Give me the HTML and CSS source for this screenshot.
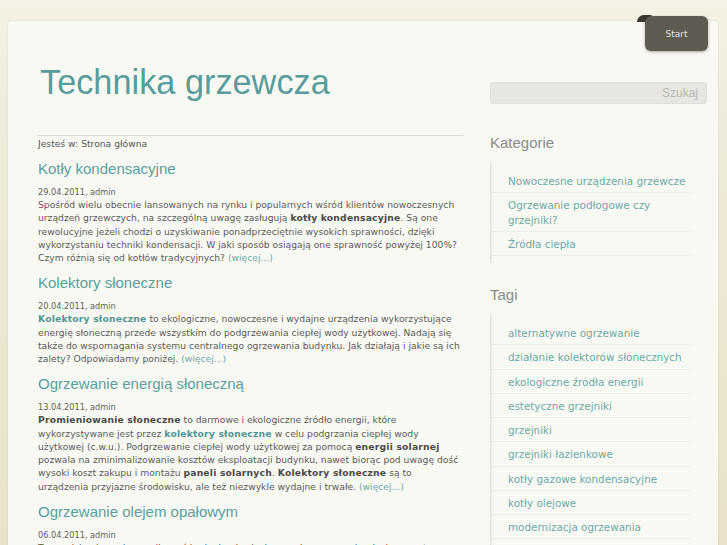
FILE: index.html
```html
<!DOCTYPE html>
<html lang="pl">
<head>
<meta charset="utf-8">
<title>Technika grzewcza</title>
<link rel="stylesheet" href="styles.css">
</head>
<body>
<div class="page">
  <nav class="menu"><a class="tab" href="#">Start</a></nav>
  <div class="card">
    <main class="main">
      <h1 class="site-title">Technika grzewcza</h1>
      <div class="crumbs">Jesteś w: Strona główna</div>

      <article class="post">
        <h2 class="post-title">Kotły kondensacyjne</h2>
        <div class="meta">29.04.2011, admin</div>
        <p class="excerpt">Spośród wielu obecnie lansowanych na rynku i popularnych wśród klientów nowoczesnych urządzeń grzewczych, na szczególną uwagę zasługują <strong>kotły kondensacyjne</strong>. Są one rewolucyjne jeżeli chodzi o uzyskiwanie ponadprzeciętnie wysokich sprawności, dzięki wykorzystaniu techniki kondensacji. W jaki sposób osiągają one sprawność powyżej 100%? Czym różnią się od kotłów tradycyjnych? <a class="more" href="#">(więcej...)</a></p>
      </article>

      <article class="post">
        <h2 class="post-title">Kolektory słoneczne</h2>
        <div class="meta">20.04.2011, admin</div>
        <p class="excerpt"><a class="strong-link" href="#">Kolektory słoneczne</a> to ekologiczne, nowoczesne i wydajne urządzenia wykorzystujące energię słoneczną przede wszystkim do podgrzewania ciepłej wody użytkowej. Nadają się także do wspomagania systemu centralnego ogrzewania budynku. Jak działają i jakie są ich zalety? Odpowiadamy poniżej. <a class="more" href="#">(więcej...)</a></p>
      </article>

      <article class="post">
        <h2 class="post-title">Ogrzewanie energią słoneczną</h2>
        <div class="meta">13.04.2011, admin</div>
        <p class="excerpt"><strong>Promieniowanie słoneczne</strong> to darmowe i ekologiczne źródło energii, które wykorzystywane jest przez <a class="strong-link" href="#">kolektory słoneczne</a> w celu podgrzania ciepłej wody użytkowej (c.w.u.). Podgrzewanie ciepłej wody użytkowej za pomocą <strong>energii solarnej</strong> pozwala na zminimalizowanie kosztów eksploatacji budynku, nawet biorąc pod uwagę dość wysoki koszt zakupu i montażu <strong>paneli solarnych</strong>. <strong>Kolektory słoneczne</strong> są to urządzenia przyjazne środowisku, ale też niezwykle wydajne i trwałe. <a class="more" href="#">(więcej...)</a></p>
      </article>

      <article class="post">
        <h2 class="post-title">Ogrzewanie olejem opałowym</h2>
        <div class="meta">06.04.2011, admin</div>
        <p class="excerpt">Tam, gdzie nie można podłączyć budynku do sieci gazu ziemnego, mieszkańcy często decydują się na ogrzewanie olejem opałowym.</p>
      </article>
    </main>

    <aside class="sidebar">
      <form class="search"><input class="search-input" type="text" placeholder="Szukaj"></form>

      <section class="widget">
        <h3 class="widget-title">Kategorie</h3>
        <ul class="links">
          <li><a href="#">Nowoczesne urządzenia grzewcze</a></li>
          <li><a href="#">Ogrzewanie podłogowe czy grzejniki?</a></li>
          <li><a href="#">Źródła ciepła</a></li>
        </ul>
      </section>

      <section class="widget">
        <h3 class="widget-title">Tagi</h3>
        <ul class="links">
          <li><a href="#">alternatywne ogrzewanie</a></li>
          <li><a href="#">działanie kolektorów słonecznych</a></li>
          <li><a href="#">ekologiczne źródła energii</a></li>
          <li><a href="#">estetyczne grzejniki</a></li>
          <li><a href="#">grzejniki</a></li>
          <li><a href="#">grzejniki łazienkowe</a></li>
          <li><a href="#">kotły gazowe kondensacyjne</a></li>
          <li><a href="#">kotły olejowe</a></li>
          <li><a href="#">modernizacja ogrzewania</a></li>
          <li><a href="#">ogrzewanie podłogowe</a></li>
        </ul>
      </section>
    </aside>
  </div>
</div>
</body>
</html>
```

FILE: styles.css
```css
html, body {
  margin: 0;
  padding: 0;
  height: 100%;
  overflow: hidden;
}

body {
  background-color: #e9e2c9;
  background-image: linear-gradient(to bottom, #f5f2e5 0px, #efebda 120px, #e9e2c9 545px);
  font-family: "DejaVu Sans", Verdana, sans-serif;
  color: #585858;
}

a {
  text-decoration: none;
}

.page {
  position: relative;
  padding: 21px 9px 0 8px;
  min-height: 100%;
  box-sizing: border-box;
}

/* top menu tab */
.menu {
  position: absolute;
  left: 645px;
  top: 16px;
  z-index: 2;
}

.tab {
  position: relative;
  display: flex;
  align-items: center;
  justify-content: center;
  width: 63px;
  height: 35px;
  background: #5f5b53;
  border-radius: 6px;
  box-shadow: 0 1px 3px rgba(0, 0, 0, 0.35);
  color: #e4e1d9;
  font-family: "DejaVu Sans", sans-serif;
  font-size: 9px;
}

.tab::before {
  content: "";
  position: absolute;
  left: -8px;
  top: -1px;
  width: 16px;
  height: 7px;
  background: #3a3731;
  border-radius: 7px 3px 0 0;
  z-index: -1;
}

/* main card */
.card {
  display: grid;
  grid-template-columns: 425px 217px;
  column-gap: 27px;
  align-items: start;
  padding: 41px 11px 0 30px;
  min-height: 540px;
  background: #f9f9f4;
  border-radius: 4px 4px 0 0;
  box-shadow: 0 0 2px rgba(120, 110, 80, 0.18);
}

.site-title {
  margin: 0;
  padding-left: 2px;
  font-family: "Liberation Sans", Arial, sans-serif;
  font-weight: normal;
  font-size: 34.3px;
  line-height: 40px;
  color: #579d9b;
}

.crumbs {
  margin-top: 33px;
  padding-top: 1px;
  border-top: 1px solid #dddcd5;
  font-size: 9.2px;
  line-height: 13px;
  color: #555;
}

.post-title {
  margin: 10px 0 0;
  font-family: "Liberation Sans", Arial, sans-serif;
  font-weight: normal;
  font-size: 15px;
  line-height: 18px;
  color: #5a9e9f;
}

.meta {
  margin-top: 8px;
  font-size: 8.2px;
  line-height: 12px;
  color: #606060;
}

.excerpt {
  margin: 0;
  font-size: 9.2px;
  line-height: 13.25px;
  color: #5a5a5a;
}

.excerpt strong {
  color: #4a4a4a;
  letter-spacing: 0.2px;
}

.strong-link {
  font-weight: bold;
  letter-spacing: 0.2px;
  color: #4f9596;
}

.more {
  color: #6aa9a9;
}

/* sidebar */
.sidebar {
  padding-top: 20px;
}

.search {
  margin: 0;
}

.search-input {
  display: block;
  box-sizing: border-box;
  width: 217px;
  height: 22px;
  margin: 0;
  padding: 0 8px;
  border: 1px solid #e0e0da;
  border-radius: 3px;
  background: #e7e7e2;
  font-family: "Liberation Sans", Arial, sans-serif;
  font-size: 12px;
  text-align: right;
  color: #777;
  outline: none;
}

.search-input::placeholder {
  color: #b9b9b3;
}

.widget {
  margin-top: 30px;
}

.widget + .widget {
  margin-top: 23px;
}

.widget-title {
  margin: 0;
  font-family: "Liberation Sans", Arial, sans-serif;
  font-weight: normal;
  font-size: 15px;
  line-height: 18px;
  color: #8a8a86;
}

.links {
  list-style: none;
  margin: 10px 17px 0 0;
  padding: 7px 0;
  box-shadow: inset 3px 0 3px -2px rgba(0, 0, 0, 0.13);
}

.links li {
  padding: 5px 0 4px 18px;
  border-bottom: 1px dotted #e2e2dc;
  font-size: 10.4px;
  line-height: 14.25px;
}

.links a {
  color: #6aa9a8;
}
```
